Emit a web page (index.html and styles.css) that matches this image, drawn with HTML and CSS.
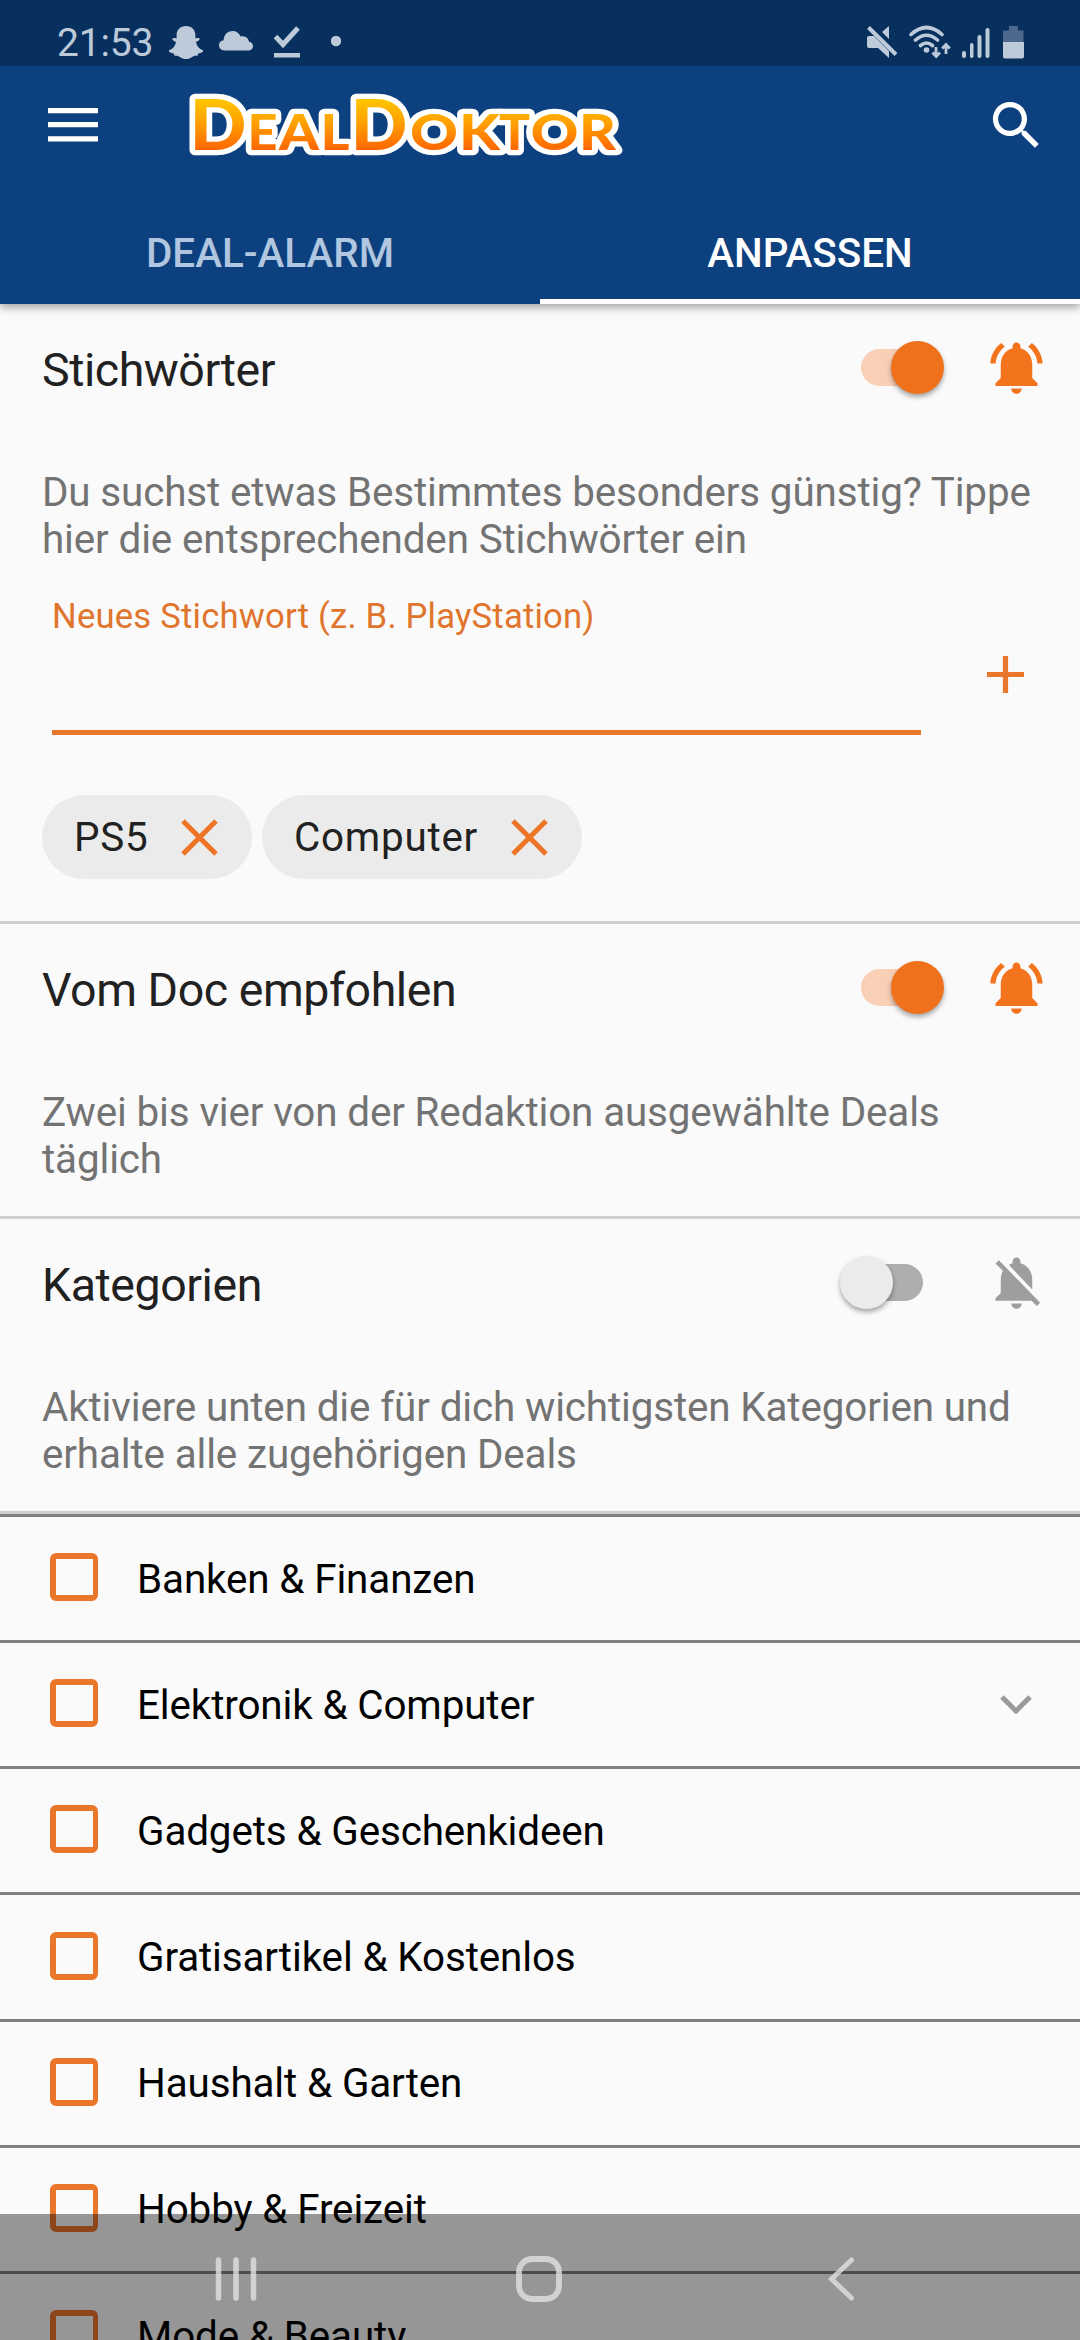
FILE: index.html
```html
<!DOCTYPE html>
<html lang="de">
<head>
<meta charset="utf-8">
<title>DealDoktor</title>
<link rel="stylesheet" href="styles.css">
</head>
<body>
<svg class="defs" width="0" height="0" aria-hidden="true">
  <symbol id="bell-on" viewBox="0 0 24 24"><path d="M7.58 4.08 6.15 2.65C3.75 4.48 2.17 7.3 2.03 10.5h2c.15-2.65 1.51-4.97 3.55-6.42zm12.39 6.42h2c-.15-3.2-1.73-6.02-4.12-7.85l-1.42 1.43c2.02 1.45 3.39 3.77 3.54 6.42zM18 11c0-3.07-1.64-5.64-4.5-6.32V4c0-.83-.67-1.5-1.5-1.5s-1.5.67-1.5 1.5v.68C7.63 5.36 6 7.92 6 11v5l-2 2v1h16v-1l-2-2v-5zm-6 11c.14 0 .27-.01.4-.04.65-.14 1.18-.58 1.44-1.18.1-.24.15-.5.15-.78h-4c.01 1.1.9 2 2.01 2z"/></symbol>
  <symbol id="bell-off" viewBox="0 0 24 24"><path d="M20 18.69 7.84 6.14 5.27 3.49 4 4.76l2.8 2.8v.01c-.52.99-.8 2.16-.8 3.42v5l-2 2v1h13.73l2 2L21 19.72l-1-1.03zM12 22c1.11 0 2-.89 2-2h-4c0 1.11.89 2 2 2zm6-7.32V11c0-3.08-1.64-5.64-4.5-6.32V4c0-.83-.67-1.5-1.5-1.5s-1.5.67-1.5 1.5v.68c-.15.03-.29.08-.42.12-.1.03-.2.07-.3.11h-.01c-.01 0-.01 0-.02.01-.23.09-.46.2-.68.31 0 0-.01 0-.01.01L18 14.68z"/></symbol>
  <symbol id="close" viewBox="0 0 37 37"><path d="M2 2l33 33M35 2L2 35" fill="none" stroke="currentColor" stroke-width="5"/></symbol>
</svg>
<div class="screen">
  <header class="top">
    <div class="status">
      <span class="clock">21:53</span>
      <svg class="status-left" width="180" height="36" viewBox="0 0 180 36">
        <path d="M22 1c6 0 9.400 4.200 9.400 9.200v3.300c2-.8 4-.6 4.300.6.200 1.200-1.700 2.100-3.700 2.900.8 4.400 3.200 6.700 7 8.300.6 2-2 2.600-4.700 3.200l-.9 2.300c-2.100-.2-3.700 0-5.300 1.200C26 33.500 24.200 34 22 34s-4-.5-6.100-2c-1.600-1.200-3.200-1.400-5.300-1.200l-.9-2.300C7 27.900 4.400 27.300 5 25.300c3.800-1.600 6.200-3.900 7-8.300-2-.8-3.900-1.700-3.700-2.900.3-1.200 2.300-1.400 4.300-.6v-3.300C12.600 5.200 16 1 22 1z"/>
        <path d="M60.500 25.500c-3.500 0-5.500-2.500-5.500-5.200s2-4.800 4.600-5c.3-5.400 3.700-9.300 9-9.300 3.700 0 6.500 2 8 5.500 4.500-.8 7.700 1.500 8.400 5.300 2.500.4 4 2.200 4 4.400 0 2.500-1.900 4.300-4.500 4.300z"/>
        <path d="M110 28h26v4.500h-26z"/>
        <path d="M111.500 11.500l7.500 8L134 3" fill="none" stroke="#bdcad9" stroke-width="5"/>
        <circle cx="172" cy="16" r="5.200"/>
      </svg>
      <svg class="status-right" width="164" height="36" viewBox="0 0 164 36">
        <path d="M4 11h5l15 15v7l-11-10H4q-2 0-2-2v-8q0-2 2-2zM24 1v13l-7-7z"/>
        <path d="M3.500 2.500L31 29.500" fill="none" stroke="#bdcad9" stroke-width="4"/>
        <g fill="none" stroke="#bdcad9" stroke-width="3.600" stroke-linecap="round">
          <path d="M46 9.500q15.500-14 31 0M50.500 15q11-9.500 22 0M55.500 20.500q6-5 12 0"/>
        </g>
        <circle cx="61.500" cy="25" r="2.800"/>
        <path d="M71 22v9M67.500 27.500l3.700 4 3.700-4M81 29v-9M77.200 23.500l3.800-4 3.800 4" fill="none" stroke="#bdcad9" stroke-width="2.800"/>
        <rect x="97" y="26" width="4" height="7" rx="2"/><rect x="105" y="18" width="3.500" height="15" rx="1.700"/><rect x="112.500" y="10" width="4" height="23" rx="2"/><rect x="120.500" y="3" width="4" height="30" rx="2"/>
        <path d="M144 1h9v4.500h5.500V17H138V5.500h6z" fill="#4c698d"/>
        <path d="M138 17h21v14.500q0 2-2 2h-17q-2 0-2-2z"/>
      </svg>
    </div>
    <div class="toolbar">
      <svg class="menu" width="50" height="36" viewBox="0 0 50 36"><path d="M0 1h50v5.300H0zM0 15h50v5.300H0zM0 29.200h50v5.300H0z"/></svg>
      <svg class="logo" width="440" height="110" viewBox="185 70 440 110" role="img" aria-label="DealDoktor">
        <defs>
          <linearGradient id="gold" gradientUnits="userSpaceOnUse" x1="0" y1="99" x2="0" y2="150"><stop offset="0" stop-color="#ffc400"/><stop offset=".45" stop-color="#ffa000"/><stop offset="1" stop-color="#ff6400"/></linearGradient>
        </defs>
        <use class="logo-back" href="#letters"/>
        <g id="letters">
          <text class="cap" x="189.500" y="149" textLength="57" lengthAdjust="spacingAndGlyphs">D</text><text x="247.500" y="149" textLength="30" lengthAdjust="spacingAndGlyphs">E</text><text x="279" y="149" textLength="40" lengthAdjust="spacingAndGlyphs">A</text><text x="320.500" y="149" textLength="29" lengthAdjust="spacingAndGlyphs">L</text><text class="cap" x="350.500" y="149" textLength="57" lengthAdjust="spacingAndGlyphs">D</text><text x="410" y="149" textLength="48" lengthAdjust="spacingAndGlyphs">O</text><text x="459" y="149" textLength="41" lengthAdjust="spacingAndGlyphs">K</text><text x="499" y="149" textLength="31" lengthAdjust="spacingAndGlyphs">T</text><text x="530.500" y="149" textLength="48" lengthAdjust="spacingAndGlyphs">O</text><text x="579" y="149" textLength="37" lengthAdjust="spacingAndGlyphs">R</text>
        </g>
      </svg>
      <svg class="search" width="63" height="63" viewBox="0 0 24 24"><path d="M15.500 14h-.79l-.28-.27A6.471 6.471 0 0 0 16 9.500 6.500 6.500 0 1 0 9.500 16c1.610 0 3.090-.59 4.230-1.570l.27.28v.79l5 4.990L20.490 19l-4.990-5zm-6 0C7.010 14 5 11.990 5 9.500S7.010 5 9.500 5 14 7.010 14 9.500 11.990 14 9.500 14z"/></svg>
    </div>
    <nav class="tabs">
      <div class="tab">DEAL-ALARM</div>
      <div class="tab active">ANPASSEN</div>
    </nav>
  </header>

  <main>
    <section class="section">
      <div class="head"><h2>Stichwörter</h2><span class="switch on"><span class="track"></span><span class="thumb"></span></span><svg class="bell" width="63" height="63"><use href="#bell-on"/></svg></div>
      <p class="desc">Du suchst etwas Bestimmtes besonders günstig? Tippe<br>hier die entsprechenden Stichwörter ein</p>
      <div class="entry">
        <div class="field">Neues Stichwort (z. B. PlayStation)</div>
        <svg class="plus" width="37" height="37" viewBox="0 0 37 37"><path d="M15.900 0h5.200v15.900H37v5.200H21.100V37h-5.200V21.100H0v-5.200h15.900z"/></svg>
      </div>
      <div class="chips">
        <span class="chip">PS5<svg width="37" height="37"><use href="#close"/></svg></span>
        <span class="chip wide">Computer<svg width="37" height="37"><use href="#close"/></svg></span>
      </div>
    </section>
    <section class="section">
      <div class="head"><h2>Vom Doc empfohlen</h2><span class="switch on"><span class="track"></span><span class="thumb"></span></span><svg class="bell" width="63" height="63"><use href="#bell-on"/></svg></div>
      <p class="desc">Zwei bis vier von der Redaktion ausgewählte Deals<br>täglich</p>
    </section>
    <section class="section">
      <div class="head"><h2>Kategorien</h2><span class="switch off"><span class="track"></span><span class="thumb"></span></span><svg class="bell muted" width="63" height="63"><use href="#bell-off"/></svg></div>
      <p class="desc">Aktiviere unten die für dich wichtigsten Kategorien und<br>erhalte alle zugehörigen Deals</p>
    </section>
    <ul class="list">
      <li><span class="box"></span><span class="name">Banken &amp; Finanzen</span></li>
      <li><span class="box"></span><span class="name">Elektronik &amp; Computer</span><svg class="chevron" width="32" height="20" viewBox="0 0 32 20"><path d="M2 2l14 14L30 2" fill="none" stroke="#9b9b9b" stroke-width="5"/></svg></li>
      <li><span class="box"></span><span class="name">Gadgets &amp; Geschenkideen</span></li>
      <li><span class="box"></span><span class="name">Gratisartikel &amp; Kostenlos</span></li>
      <li><span class="box"></span><span class="name">Haushalt &amp; Garten</span></li>
      <li><span class="box"></span><span class="name">Hobby &amp; Freizeit</span></li>
      <li><span class="box"></span><span class="name">Mode &amp; Beauty</span></li>
    </ul>
  </main>

  <footer class="navbar">
    <svg width="42" height="46" viewBox="0 0 42 46"><path d="M3.500 4v38M21 4v38M38.500 4v38" stroke-width="5.500"/></svg>
    <svg class="home" width="46" height="46" viewBox="0 0 46 46"><rect x="3" y="3" width="40" height="40" rx="13" stroke-width="5.800"/></svg>
    <svg width="30" height="46" viewBox="0 0 30 46"><path d="M25.500 4L5.500 23l20 19" stroke-width="5"/></svg>
  </footer>
</div>
</body>
</html>
```
FILE: styles.css
```css
* { box-sizing: border-box; margin: 0; padding: 0; }

html, body { width: 1080px; height: 2340px; overflow: hidden; }

body { font-family: Roboto, sans-serif; background: #fafafa; color: #212121; }

svg { display: block; flex: none; }
.defs { position: absolute; }

.screen { position: relative; width: 1080px; height: 2340px; overflow: hidden; background: #fafafa; }

/* header */
.top {
  position: relative;
  height: 304px;
  background: #0d407f;
  box-shadow: 0 3px 9px rgba(0, 0, 0, .38);
}

.status {
  display: flex;
  align-items: flex-start;
  height: 66px;
  padding: 25px 51px 0 57px;
  background: #07305f;
  color: #bdcad9;
  fill: #bdcad9;
}
.clock { width: 107px; font-size: 39px; line-height: 37px; letter-spacing: -.2px; white-space: nowrap; }
.status-right { margin-left: auto; }

.toolbar {
  display: flex;
  align-items: center;
  height: 120px;
  padding: 0 32px 0 48px;
  fill: #fff;
}
.menu { margin-top: -3px; }
.logo { margin: 0 0 0 87px; font-family: Lato, sans-serif; font-weight: 900; font-size: 48.500px; }
.logo .cap { font-size: 69.500px; }
#letters { fill: url(#gold); }
#letters text { stroke-linejoin: round; }
.logo-back { stroke: #fff; stroke-width: 10.500px; }
.search { margin: -2px 0 0 auto; }

.tabs { display: flex; height: 118px; }
.tab {
  width: 540px;
  padding-top: 44px;
  font-size: 40.400px;
  line-height: 48px;
  font-weight: 500;
  text-align: center;
  color: #b1c6df;
}
.tab.active { color: #fff; border-bottom: 5px solid #fff; }

/* notification sections */
.section { border-bottom: 3px solid #cfcfcf; padding-bottom: 33px; }

.head { display: flex; align-items: center; height: 127px; padding: 0 32px 0 42px; }
.head h2 { padding-top: 5px; font-size: 46.500px; line-height: 56px; font-weight: 400; letter-spacing: -.45px; }

.switch { display: grid; align-items: center; width: 104px; height: 53px; margin: 0 41px 0 auto; }
.track, .thumb { grid-area: 1 / 1; }
.track { width: 74px; height: 37px; border-radius: 19px; margin-left: 21px; background: #f9d0b6; }
.thumb {
  width: 53px;
  height: 53px;
  border-radius: 50%;
  background: #ef711c;
  justify-self: end;
  box-shadow: 0 3px 5px rgba(0, 0, 0, .35);
}
.switch.off .track { margin-left: 9px; background: #aeaeae; }
.switch.off .thumb { justify-self: start; background: #ebebeb; }
.bell { fill: #f4731d; }
.bell.muted { fill: #9e9e9e; }

.desc {
  padding: 38px 0 0 42px;
  font-size: 40.400px;
  line-height: 47px;
  letter-spacing: -.14px;
  color: #737373;
  white-space: nowrap;
}

.entry { display: flex; padding: 33px 56px 0 52px; }
.field {
  width: 869px;
  height: 139px;
  border-bottom: 5px solid #e8762b;
  font-size: 34.650px;
  line-height: 40px;
  letter-spacing: .2px;
  color: #e0752d;
}
.plus { margin: 60px 0 0 auto; fill: #e8762b; }

.chips { display: flex; gap: 10px; padding: 60px 42px 9px; }
.chip {
  display: flex;
  align-items: center;
  justify-content: space-between;
  width: 210px;
  height: 84px;
  padding: 0 34px 0 32px;
  border-radius: 42px;
  background: #ebebeb;
  font-size: 40.400px;
  letter-spacing: .75px;
  color: #212121;
}
.chip svg { color: #ee7526; }
.chip.wide { width: 320px; }

/* categories */
.list { list-style: none; border-top: 3px solid #808080; }
.list li {
  display: flex;
  align-items: center;
  height: 126.170px;
  padding: 0 48px 0 50px;
  border-bottom: 3px solid #808080;
}
.box { width: 48px; height: 48px; margin-top: -3px; border: 5.500px solid #ea762a; border-width: 6px 5px 6px 6px; border-radius: 6px; }
.name {
  margin-left: 39px;
  padding-top: 2px;
  font-size: 40.400px;
  line-height: 48px;
  letter-spacing: -.13px;
  color: #000;
  white-space: nowrap;
}
.chevron { margin-left: auto; }

/* system navigation over the page */
.navbar {
  position: absolute;
  left: 0;
  right: 0;
  bottom: 0;
  display: flex;
  justify-content: space-between;
  align-items: center;
  height: 126px;
  padding: 3px 224px 0 215px;
  background: rgba(0, 0, 0, .4);
}
.navbar svg { fill: none; stroke: rgba(225, 225, 225, .8); stroke-linecap: round; }
.navbar .home { margin-right: 6px; }
```
